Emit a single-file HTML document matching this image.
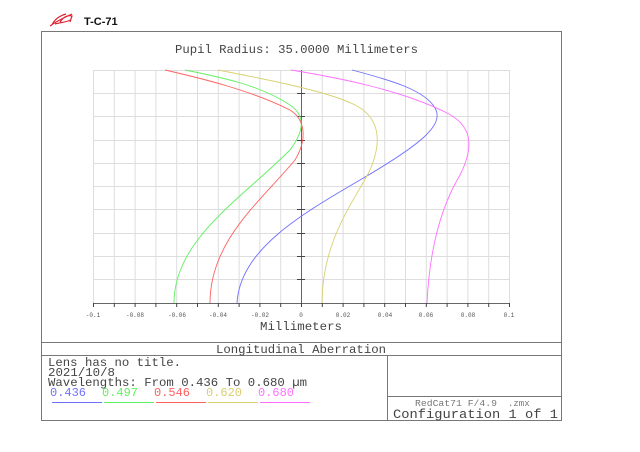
<!DOCTYPE html>
<html><head><meta charset="utf-8"><style>
body{margin:0;background:#fff;width:640px;height:452px;overflow:hidden;position:relative;font-family:"Liberation Mono",monospace;}
</style></head><body>
<svg width="640" height="452" style="position:absolute;left:0;top:0">
<g fill="none" stroke="#e02030" stroke-width="1.2">
<path d="M52,25 C55,18 62,15 66,14 M50,26 C58,20 68,16 72,14 M55,24 C62,22 68,22 70,20 M60,22 C64,16 68,15 72,16 L70,22"/>
</g>
<text x="84" y="25" font-family="Liberation Sans" font-size="11" font-weight="bold" fill="#111">T-C-71</text>
<rect x="41.5" y="31.5" width="520" height="389" fill="none" stroke="#777"/>
<line x1="41" y1="342.5" x2="562" y2="342.5" stroke="#777"/>
<line x1="41" y1="355.5" x2="562" y2="355.5" stroke="#777"/>
<line x1="387.5" y1="355" x2="387.5" y2="421" stroke="#777"/>
<line x1="387" y1="396.5" x2="562" y2="396.5" stroke="#777"/>
<g stroke="#ddd" stroke-width="1">
<path d="M93.5,70V303M114.3,70V303M135.1,70V303M155.9,70V303M176.7,70V303M197.5,70V303M218.3,70V303M239.1,70V303M259.9,70V303M280.7,70V303M322.3,70V303M343.1,70V303M363.9,70V303M384.7,70V303M405.5,70V303M426.3,70V303M447.1,70V303M467.9,70V303M488.7,70V303M509.5,70V303"/>
<path d="M93,70.5H509M93,93.5H509M93,116.5H509M93,140.5H509M93,163.5H509M93,186.5H509M93,209.5H509M93,233.5H509M93,256.5H509M93,279.5H509"/>
</g>
<line x1="301.5" y1="70" x2="301.5" y2="303" stroke="#666"/>
<line x1="93" y1="303.5" x2="509" y2="303.5" stroke="#666"/>
<g stroke="#444"><path d="M297,93.5h8M297,116.5h8M297,140.5h8M297,163.5h8M297,186.5h8M297,209.5h8M297,233.5h8M297,256.5h8M297,279.5h8"/>
<path d="M93.5,303v4M135.1,303v4M176.7,303v4M218.3,303v4M259.9,303v4M301.5,303v4M343.1,303v4M384.7,303v4M426.3,303v4M467.9,303v4M509.5,303v4M114.3,303v4M155.9,303v4M197.5,303v4M239.1,303v4M280.7,303v4M322.3,303v4M363.9,303v4M405.5,303v4M447.1,303v4M488.7,303v4"/></g>
<g fill="none" stroke-width="0.9">
<path stroke="#7070ff" d="M237,303 C240,250 300,215 360,180 C420,145 445,125 435,108 C425,90 390,80 352,70"/>
<path stroke="#60f060" d="M174,303 C174,240 240,200 290,150 C305,130 305,115 290,105 C260,85 220,77 185,70"/>
<path stroke="#ff6060" d="M210,303 C210,240 262,200 295,160 C307,140 306,120 290,110 C250,90 200,78 165,70"/>
<path stroke="#d8d070" d="M322,303 C322,240 355,200 370,170 C385,135 375,115 355,105 C330,92 270,80 218,70"/>
<path stroke="#ff70ff" d="M427,303 C430,240 445,200 460,175 C475,145 472,125 445,112 C400,90 340,78 291,70"/>
</g>
<g stroke-width="1"><path stroke="#7070ff" d="M52,402.5h50"/><path stroke="#60f060" d="M104,402.5h50"/><path stroke="#ff6060" d="M156,402.5h50"/><path stroke="#d8d070" d="M208,402.5h50"/><path stroke="#ff70ff" d="M260,402.5h50"/></g>
<g font-family="Liberation Mono" font-size="6" fill="#555" text-anchor="middle">
<text x="93" y="317">-0.1</text><text x="135" y="317">-0.08</text><text x="177" y="317">-0.06</text><text x="218" y="317">-0.04</text><text x="260" y="317">-0.02</text><text x="301" y="317">0</text><text x="343" y="317">0.02</text><text x="385" y="317">0.04</text><text x="426" y="317">0.06</text><text x="468" y="317">0.08</text><text x="509" y="317">0.1</text>
</g>
<g font-family="Liberation Mono" fill="#444">
<text x="175" y="53" font-size="12" textLength="243" lengthAdjust="spacingAndGlyphs">Pupil Radius: 35.0000 Millimeters</text>
<text x="260" y="330" font-size="12" textLength="82" lengthAdjust="spacingAndGlyphs">Millimeters</text>
<text x="216" y="353" font-size="12" textLength="170" lengthAdjust="spacingAndGlyphs">Longitudinal Aberration</text>
<text x="48" y="366" font-size="12" textLength="133" lengthAdjust="spacingAndGlyphs">Lens has no title.</text>
<text x="48" y="376" font-size="12" textLength="67" lengthAdjust="spacingAndGlyphs">2021/10/8</text>
<text x="48" y="386" font-size="12" textLength="259" lengthAdjust="spacingAndGlyphs">Wavelengths: From 0.436 To 0.680 µm</text>
<text x="50" y="396" font-size="12" fill="#7070ff" textLength="36" lengthAdjust="spacingAndGlyphs">0.436</text>
<text x="102" y="396" font-size="12" fill="#60f060" textLength="36" lengthAdjust="spacingAndGlyphs">0.497</text>
<text x="154" y="396" font-size="12" fill="#ff6060" textLength="36" lengthAdjust="spacingAndGlyphs">0.546</text>
<text x="206" y="396" font-size="12" fill="#d8d070" textLength="36" lengthAdjust="spacingAndGlyphs">0.620</text>
<text x="258" y="396" font-size="12" fill="#ff70ff" textLength="36" lengthAdjust="spacingAndGlyphs">0.680</text>
<text x="415" y="406" font-size="9" fill="#777" textLength="82" lengthAdjust="spacingAndGlyphs">RedCat71 F/4.9</text>
<text x="508" y="406" font-size="9" fill="#777">.zmx</text>
<text x="393" y="418" font-size="13" textLength="165" lengthAdjust="spacingAndGlyphs">Configuration 1 of 1</text>
</g>
</svg>
</body></html>
